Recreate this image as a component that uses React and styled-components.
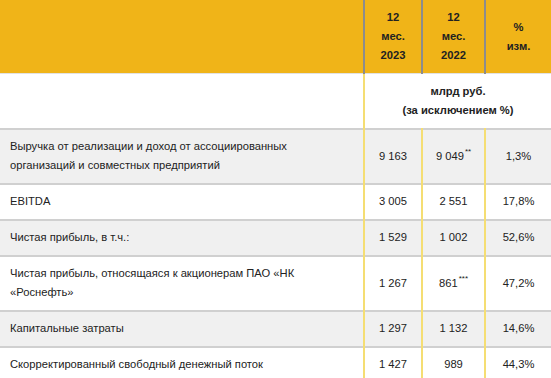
import React from 'react';
import styled, { createGlobalStyle } from 'styled-components';

const GlobalStyle = createGlobalStyle`
  html, body {
    margin: 0;
    padding: 0;
    background: #fff;
  }
  body {
    font-family: "Liberation Sans", Arial, sans-serif;
    color: #222;
  }
`;

const Table = styled.table`
  width: 551px;
  border-collapse: collapse;
  table-layout: fixed;
  font-size: 11.2px;
  line-height: 19px;
`;

const HeadRow = styled.tr`
  background: #f0b418;
`;

const HeadCell = styled.th`
  padding: 8px 4px;
  font-weight: bold;
  text-align: center;
  vertical-align: middle;
  border-left: ${({ $first }) => ($first ? 'none' : '2px solid #8c8c8c')};
`;

const Row = styled.tr`
  background: ${({ $shaded }) => ($shaded ? '#f0f0f0' : '#fff')};
  border-top: ${({ $unit }) => ($unit ? '1px solid #e2e2e2' : '2px solid #d0d0d0')};
`;

const Label = styled.td`
  padding: ${({ $unit }) => ($unit ? '8px 40px 8px 10px' : '7px 40px 8px 10px')};
  text-align: left;
  vertical-align: middle;
`;

const Value = styled.td`
  padding: ${({ $unit }) => ($unit ? '8px 4px' : '7px 4px 8px')};
  text-align: center;
  vertical-align: middle;
  border-left: 2px solid #f5de73;
  font-weight: ${({ $unit }) => ($unit ? 'bold' : 'normal')};
`;

const Note = styled.sup`
  font-size: 8px;
  line-height: 0;
  vertical-align: 6px;
  margin-left: 1px;
`;

const rows = [
  {
    label: 'Выручка от реализации и доход от ассоциированных организаций и совместных предприятий',
    cur: '9 163',
    prev: '9 049',
    note: '**',
    change: '1,3%',
  },
  { label: 'EBITDA', cur: '3 005', prev: '2 551', change: '17,8%' },
  { label: 'Чистая прибыль, в т.ч.:', cur: '1 529', prev: '1 002', change: '52,6%' },
  {
    label: 'Чистая прибыль, относящаяся к акционерам ПАО «НК «Роснефть»',
    cur: '1 267',
    prev: '861',
    note: '***',
    change: '47,2%',
  },
  { label: 'Капитальные затраты', cur: '1 297', prev: '1 132', change: '14,6%' },
  { label: 'Скорректированный свободный денежный поток', cur: '1 427', prev: '989', change: '44,3%' },
];

const App = () => (
  <>
    <GlobalStyle />
    <Table>
      <colgroup>
        <col style={{ width: 364 }} />
        <col style={{ width: 58 }} />
        <col style={{ width: 63 }} />
        <col />
      </colgroup>
      <thead>
        <HeadRow>
          <HeadCell $first />
          <HeadCell>
            12
            <br />
            мес.
            <br />
            2023
          </HeadCell>
          <HeadCell>
            12
            <br />
            мес.
            <br />
            2022
          </HeadCell>
          <HeadCell>
            %
            <br />
            изм.
          </HeadCell>
        </HeadRow>
      </thead>
      <tbody>
        <Row $unit>
          <Label $unit />
          <Value colSpan={3} $unit>
            млрд руб.
            <br />
            (за исключением %)
          </Value>
        </Row>
        {rows.map((r, i) => (
          <Row key={r.label} $shaded={i % 2 === 0}>
            <Label>{r.label}</Label>
            <Value>{r.cur}</Value>
            <Value>
              {r.prev}
              {r.note && <Note>{r.note}</Note>}
            </Value>
            <Value>{r.change}</Value>
          </Row>
        ))}
      </tbody>
    </Table>
  </>
);

export default App;
